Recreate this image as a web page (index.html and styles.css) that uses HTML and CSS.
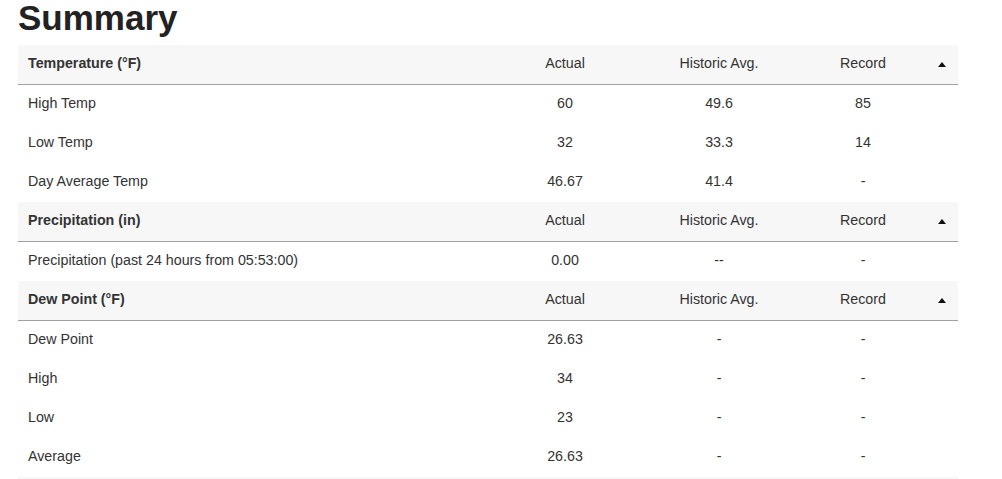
FILE: index.html
```html
<!DOCTYPE html>
<html>
<head>
<meta charset="utf-8">
<link rel="stylesheet" href="styles.css">
</head>
<body>
<h1 class="title">Summary</h1>
<table class="summary">
  <colgroup>
    <col class="c-label"><col class="c-actual"><col class="c-hist"><col class="c-rec"><col class="c-arrow">
  </colgroup>
  <tbody>
    <tr class="head"><th class="label">Temperature (°F)</th><th>Actual</th><th>Historic Avg.</th><th>Record</th><th><span class="tri"></span></th></tr>
    <tr><td class="label">High Temp</td><td>60</td><td>49.6</td><td>85</td><td></td></tr>
    <tr><td class="label">Low Temp</td><td>32</td><td>33.3</td><td>14</td><td></td></tr>
    <tr><td class="label">Day Average Temp</td><td>46.67</td><td>41.4</td><td>-</td><td></td></tr>
    <tr class="head"><th class="label">Precipitation (in)</th><th>Actual</th><th>Historic Avg.</th><th>Record</th><th><span class="tri"></span></th></tr>
    <tr><td class="label">Precipitation (past 24 hours from 05:53:00)</td><td>0.00</td><td>--</td><td>-</td><td></td></tr>
    <tr class="head"><th class="label">Dew Point (°F)</th><th>Actual</th><th>Historic Avg.</th><th>Record</th><th><span class="tri"></span></th></tr>
    <tr><td class="label">Dew Point</td><td>26.63</td><td>-</td><td>-</td><td></td></tr>
    <tr><td class="label">High</td><td>34</td><td>-</td><td>-</td><td></td></tr>
    <tr><td class="label">Low</td><td>23</td><td>-</td><td>-</td><td></td></tr>
    <tr><td class="label">Average</td><td>26.63</td><td>-</td><td>-</td><td></td></tr>
    <tr class="head"><th class="label"></th><th></th><th></th><th></th><th></th></tr>
  </tbody>
</table>
</body>
</html>
```
FILE: styles.css
```css
html, body {
  margin: 0;
  padding: 0;
  background: #fff;
}
body {
  padding: 0 18px;
  font-family: "Liberation Sans", Arial, sans-serif;
  color: #333;
  overflow: hidden;
}
.title {
  margin: 0 0 10px 0;
  font-size: 35px;
  line-height: 35px;
  font-weight: bold;
  color: #222;
}
.summary {
  width: 940px;
  border-collapse: separate;
  border-spacing: 0;
  table-layout: fixed;
  font-size: 14.25px;
}
.c-label { width: 472px; }
.c-actual { width: 150px; }
.c-hist { width: 158px; }
.c-rec { width: 130px; }
.c-arrow { width: 30px; }
.summary td, .summary th {
  height: 39px;
  padding: 0 0 3px 0;
  text-align: center;
  vertical-align: middle;
  box-sizing: border-box;
}
.summary th {
  font-weight: normal;
}
.summary .label {
  text-align: left;
  padding-left: 10px;
}
.head th, .head td {
  height: 40px;
  background: #f7f7f7;
  border-bottom: 1px solid #a0a0a0;
}
.head th.label {
  font-weight: bold;
}
.tri {
  display: inline-block;
  width: 0;
  height: 0;
  border-left: 4.5px solid transparent;
  border-right: 4.5px solid transparent;
  border-bottom: 5px solid #111;
  vertical-align: middle;
  margin-left: -2px;
}
```
